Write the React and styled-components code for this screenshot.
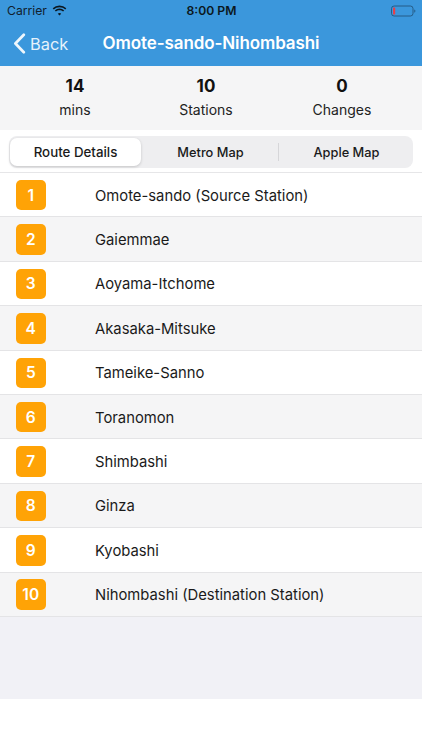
import React from "react";
import styled, { createGlobalStyle } from "styled-components";

const Global = createGlobalStyle`
  html, body { margin: 0; padding: 0; background: #fff; }
  body { font-family: Inter, "Liberation Sans", sans-serif; -webkit-font-smoothing: antialiased; }
`;

const Page = styled.div`
  width: 422px;
  height: 750px;
  display: flex;
  flex-direction: column;
  overflow: hidden;
  background: #fff;
`;

const Header = styled.header`
  height: 66px;
  flex: none;
  background: #3b97dc;
  display: flex;
  flex-direction: column;
`;

const StatusBar = styled.div`
  height: 21px;
  padding: 0 6px 0 7px;
  display: grid;
  grid-template-columns: 1fr auto 1fr;
  align-items: center;
  font-size: 12px;
  color: #10202c;
`;

const Carrier = styled.div`
  display: flex;
  align-items: center;
  gap: 5px;
  font-size: 12.2px;
`;

const Time = styled.div`
  font-weight: 600;
  font-size: 12.2px;
  color: #0b1720;
`;

const BatteryWrap = styled.div`
  justify-self: end;
  display: flex;
`;

const NavBar = styled.div`
  flex: 1;
  position: relative;
  display: flex;
  align-items: center;
  justify-content: center;
  color: #fff;
  padding-bottom: 2px;
`;

const Back = styled.div`
  position: absolute;
  left: 13px;
  top: 12px;
  display: flex;
  align-items: center;
  gap: 4px;
  font-size: 16.4px;
  color: #e6f2fb;
`;

const Title = styled.div`
  font-size: 17px;
  font-weight: 600;
  letter-spacing: -0.1px;
`;

const Stats = styled.section`
  height: 64px;
  flex: none;
  background: #f5f5f6;
  display: grid;
  grid-template-columns: 150px 112px 160px;
  text-align: center;
`;

const Stat = styled.div`
  display: flex;
  flex-direction: column;
  align-items: center;
  padding-top: 10px;
  gap: 4px;
`;

const StatValue = styled.div`
  font-size: 17px;
  font-weight: 700;
  line-height: 21px;
  color: #111;
`;

const StatLabel = styled.div`
  font-size: 14px;
  line-height: 18px;
  color: #222;
`;

const SegmentBar = styled.div`
  height: 43px;
  flex: none;
  box-sizing: border-box;
  padding: 6px 9px 4px;
  border-bottom: 1px solid #e6e6e8;
  background: #fff;
`;

const Segment = styled.div`
  height: 32px;
  border-radius: 8px;
  background: #eeeef0;
  display: grid;
  grid-template-columns: 131px 137px 1fr;
  align-items: center;
  padding: 2px 1px;
  box-sizing: border-box;
`;

const SegmentItem = styled.div`
  height: ${p => (p.$divided ? "18px" : "28px")};
  display: flex;
  align-items: center;
  justify-content: center;
  font-size: ${p => (p.$active ? "13.3px" : "12.8px")};
  font-weight: 500;
  color: #1a1a1a;
  border-radius: ${p => (p.$divided ? "0" : "7px")};
  background: ${p => (p.$active ? "#fff" : "transparent")};
  box-shadow: ${p => (p.$active ? "0 1px 3px rgba(0,0,0,0.18)" : "none")};
  border-left: ${p => (p.$divided ? "1px solid #d6d6d9" : "none")};
  padding-left: ${p => (p.$active ? "0" : "2px")};
`;

const List = styled.ul`
  list-style: none;
  margin: 0;
  padding: 0;
  flex: none;
`;

const Row = styled.li`
  height: 44.4px;
  box-sizing: border-box;
  display: flex;
  align-items: center;
  padding: 1px 0 0 15.5px;
  background: ${p => (p.$alt ? "#f5f5f6" : "#fff")};
  border-bottom: 1px solid #e4e4e6;
`;

const Badge = styled.div`
  width: 30.5px;
  height: 30.5px;
  flex: none;
  border-radius: 5px;
  background: #ffa306;
  color: #fff;
  font-weight: 600;
  font-size: 15.5px;
  display: flex;
  align-items: center;
  justify-content: center;
`;

const StationName = styled.div`
  margin: 1px 0 0 49px;
  font-size: 14.8px;
  color: #1a1a1a;
`;

const Footer = styled.div`
  height: 82px;
  flex: none;
  background: #f1f1f6;
`;

const stations = [
  "Omote-sando (Source Station)",
  "Gaiemmae",
  "Aoyama-Itchome",
  "Akasaka-Mitsuke",
  "Tameike-Sanno",
  "Toranomon",
  "Shimbashi",
  "Ginza",
  "Kyobashi",
  "Nihombashi (Destination Station)",
];

const stats = [
  ["14", "mins"],
  ["10", "Stations"],
  ["0", "Changes"],
];

const Wifi = () => (
  <svg width="15" height="11" viewBox="0 0 15 11" fill="#0b1720">
    <path d="M7.5 2.2c2.2 0 4.2.9 5.7 2.3l1.1-1.2A9.9 9.9 0 0 0 7.5.5 9.9 9.9 0 0 0 .7 3.3l1.1 1.2a8.2 8.2 0 0 1 5.7-2.3z" />
    <path d="M7.5 5.2c1.4 0 2.6.5 3.6 1.4l1.1-1.2a6.9 6.9 0 0 0-9.4 0l1.1 1.2c1-.9 2.2-1.4 3.6-1.4z" />
    <path d="M7.5 8c-.7 0-1.3.3-1.7.7l1.7 1.9 1.7-1.9C8.8 8.3 8.2 8 7.5 8z" />
  </svg>
);

const Battery = () => (
  <svg width="25" height="12" viewBox="0 0 25 12">
    <rect x="0.5" y="1" width="21.5" height="10" rx="2.6" fill="none" stroke="#1f4a6b" strokeOpacity="0.75" />
    <rect x="2" y="2.5" width="2.2" height="7" rx="0.6" fill="#e5404a" />
    <path d="M23.2 4.4c.8.2 1.2.8 1.2 1.6s-.4 1.4-1.2 1.6z" fill="#1f4a6b" fillOpacity="0.7" />
  </svg>
);

const Chevron = () => (
  <svg width="13" height="21" viewBox="0 0 13 21" fill="none">
    <path d="M10.8 1.8 2.4 10.5l8.4 8.7" stroke="#eef6fc" strokeWidth="2.7" strokeLinecap="round" strokeLinejoin="round" />
  </svg>
);

export default function App() {
  return (
    <Page>
      <Global />
      <Header>
        <StatusBar>
          <Carrier>Carrier <Wifi /></Carrier>
          <Time>8:00 PM</Time>
          <BatteryWrap><Battery /></BatteryWrap>
        </StatusBar>
        <NavBar>
          <Back><Chevron />Back</Back>
          <Title>Omote-sando-Nihombashi</Title>
        </NavBar>
      </Header>
      <Stats>
        {stats.map(([v, l]) => (
          <Stat key={l}>
            <StatValue>{v}</StatValue>
            <StatLabel>{l}</StatLabel>
          </Stat>
        ))}
      </Stats>
      <SegmentBar>
        <Segment>
          <SegmentItem $active>Route Details</SegmentItem>
          <SegmentItem>Metro Map</SegmentItem>
          <SegmentItem $divided>Apple Map</SegmentItem>
        </Segment>
      </SegmentBar>
      <List>
        {stations.map((s, i) => (
          <Row key={s} $alt={i % 2 === 1}>
            <Badge>{i + 1}</Badge>
            <StationName>{s}</StationName>
          </Row>
        ))}
      </List>
      <Footer />
    </Page>
  );
}
